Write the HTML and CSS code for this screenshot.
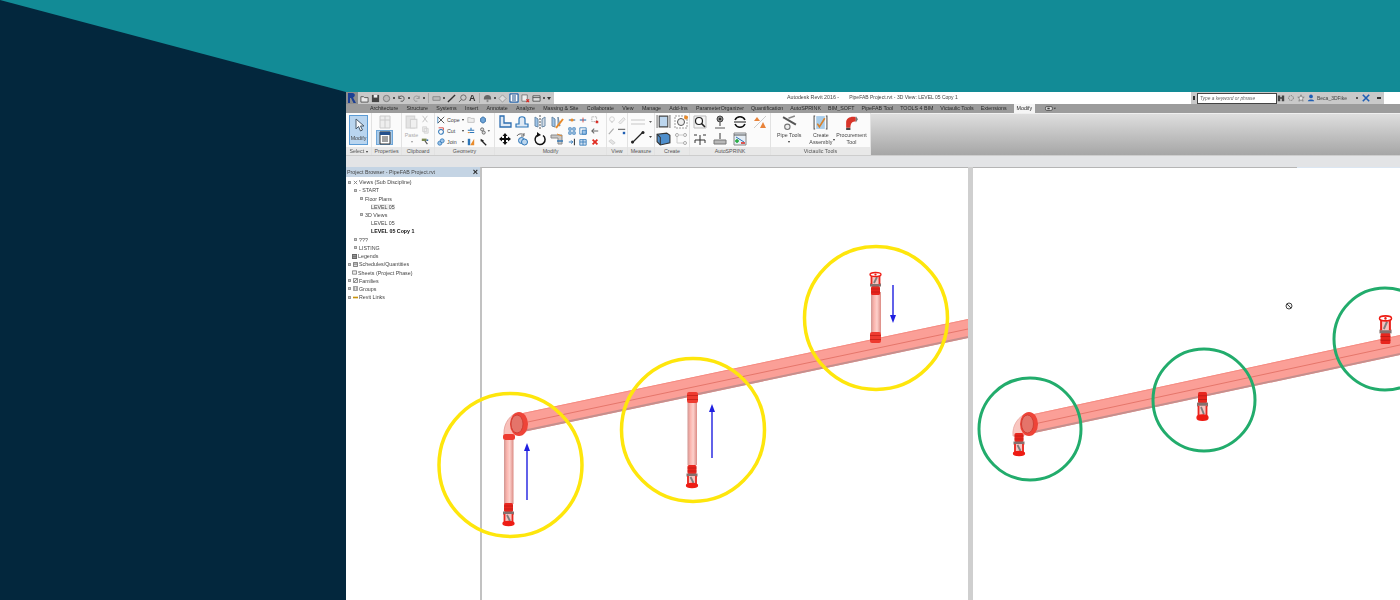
FILE: index.html
```html
<!DOCTYPE html>
<html lang="en">
<head>
    <meta charset="UTF-8">
    <meta name="viewport" content="width=device-width, initial-scale=1.0">
    <title>PipeFAB sprinkler drops</title>
    <link rel="stylesheet" href="styles.css">
</head>
<body>
<div class="page">
    <div class="side"></div>

    <div class="window">
        <!-- Title bar -->
        <div class="titlebar">
            <div class="qat">
                <svg class="logo" viewBox="0 0 12 12"><path d="M2 11V1h4.500c3 0 3 4 .5 4.500L10 11H7.500L5 6H4v5z" fill="#1c3f94"/></svg>
                <svg class="qi" viewBox="0 0 10 10"><path d="M1 3h3l1 1h4v5H1z" fill="#e8e8e8" stroke="#555"/></svg>
                <svg class="qi" viewBox="0 0 10 10"><path d="M1 1h8v8H1z" fill="#444"/><path d="M3 1h4v3H3z" fill="#eee"/></svg>
                <svg class="qi" viewBox="0 0 10 10"><circle cx="5" cy="5" r="3.500" fill="#bbb" stroke="#777"/></svg>
                <span class="dot"></span>
                <svg class="qi" viewBox="0 0 10 10"><path d="M2 5a3 3 0 1 1 2 3M2 2v3h3" fill="none" stroke="#555"/></svg>
                <span class="dot"></span>
                <svg class="qi" viewBox="0 0 10 10"><path d="M8 5a3 3 0 1 0-2 3M8 2v3H5" fill="none" stroke="#999"/></svg>
                <span class="dot"></span>
                <span class="qsep"></span>
                <svg class="qi" viewBox="0 0 10 10"><path d="M1 3h8v4H1z" fill="#bbb" stroke="#888"/></svg>
                <span class="dot"></span>
                <svg class="qi" viewBox="0 0 10 10"><path d="M1 9l8-8" stroke="#333" stroke-width="1.500"/></svg>
                <svg class="qi" viewBox="0 0 10 10"><circle cx="6" cy="4" r="3" fill="none" stroke="#666"/><path d="M4 6L1 9" stroke="#666"/></svg>
                <span class="qa">A</span>
                <span class="qsep"></span>
                <svg class="qi" viewBox="0 0 10 10"><path d="M1 5a4 4 0 0 1 8 0v1H1z" fill="#666"/><path d="M4 6v3h2V6z" fill="#888"/></svg>
                <span class="dot"></span>
                <svg class="qi" viewBox="0 0 10 10"><path d="M5 1l4 4-4 4-4-4z" fill="#ddd" stroke="#999"/></svg>
                <svg class="qi qi-on" viewBox="0 0 10 10"><path d="M1 1h8v8H1z" fill="#fff" stroke="#1c4f8c"/><path d="M3 3h4M3 5h4M3 7h4" stroke="#1c4f8c"/></svg>
                <svg class="qi" viewBox="0 0 10 10"><path d="M1 1h6v7H1z" fill="#eee" stroke="#777"/><path d="M6 6l3 3M9 6L6 9" stroke="#d8261e" stroke-width="1.300"/></svg>
                <svg class="qi" viewBox="0 0 10 10"><path d="M1 2h8v6H1z" fill="#ddd" stroke="#555"/><path d="M1 4h8" stroke="#555"/></svg>
                <span class="dot"></span>
                <span class="qdrop"></span>
            </div>
            <div class="doc-title"><span>Autodesk Revit 2016 -</span><span class="doc-name">PipeFAB Project.rvt - 3D View: LEVEL 05 Copy 1</span></div>
            <div class="infocenter">
                <span class="grip"></span>
                <div class="search">Type a keyword or phrase</div>
                <svg class="qi" viewBox="0 0 10 10"><path d="M1 2h3v7H1zM6 2h3v7H6zM4 4h2v2H4z" fill="#444"/></svg>
                <svg class="qi" viewBox="0 0 10 10"><circle cx="5" cy="5" r="3" fill="none" stroke="#666" stroke-dasharray="1.500 1"/></svg>
                <svg class="qi" viewBox="0 0 10 10"><path d="M5 1l1.200 3H9L6.800 6l.8 3L5 7.300 2.400 9l.8-3L1 4h2.800z" fill="#eee" stroke="#666" stroke-width=".8"/></svg>
                <svg class="qi" viewBox="0 0 10 10"><circle cx="5" cy="3" r="2.300" fill="#1f5fb4"/><path d="M1 9c0-3 8-3 8 0z" fill="#1f5fb4"/></svg>
                <span class="user">Beca_3DFike</span>
                <span class="dot dot-user"></span>
                <svg class="qi qi-x" viewBox="0 0 10 10"><path d="M1 1l8 8M9 1L1 9" stroke="#1f5fb4" stroke-width="2"/></svg>
                <span class="min"></span>
            </div>
        </div>

        <!-- Ribbon tabs -->
        <div class="tabs">
            <span>Architecture</span><span>Structure</span><span>Systems</span><span>Insert</span><span>Annotate</span><span>Analyze</span><span>Massing &amp; Site</span><span>Collaborate</span><span>View</span><span>Manage</span><span>Add-Ins</span><span>ParameterOrganizer</span><span>Quantification</span><span>AutoSPRINK</span><span>BIM_SOFT</span><span>PipeFAB Tool</span><span>TOOLS 4 BIM</span><span>Victaulic Tools</span><span>Extensions</span><span class="tab-on">Modify</span>
            <svg class="tab-eye" viewBox="0 0 14 6"><rect x=".5" y=".5" width="9" height="5" rx="2" fill="#ddd" stroke="#444"/><rect x="3" y="2" width="3" height="2" fill="#333"/><path d="M11 2h3l-1.500 2z" fill="#333"/></svg>
        </div>

        <!-- Ribbon -->
        <div class="ribbon">
            <div class="panel p-select">
                <div class="panel-body">
                    <div class="modify-btn">
                        <svg class="ic" viewBox="0 0 14 14"><path d="M4 1v10l2.500-2.500L8.500 13l2-1-2-4H12z" fill="#f4f7fa" stroke="#4a5a6a"/></svg>
                        <span>Modify</span>
                    </div>
                </div>
                <div class="panel-label">Select <i class="caret"></i></div>
            </div>

            <div class="panel p-props">
                <div class="panel-body col-center">
                    <svg class="ic" viewBox="0 0 14 14"><path d="M2 1h10v12H2z" fill="#eee" stroke="#ccc"/><path d="M2 5h10M7 1v12" stroke="#ccc"/></svg>
                    <div class="props-on">
                        <svg class="ic" viewBox="0 0 14 14"><path d="M2 1h10v12H2z" fill="#fff" stroke="#333"/><path d="M2 1h10v3H2z" fill="#24508c"/><path d="M4 6h6M4 8h6M4 10h6" stroke="#444"/></svg>
                    </div>
                </div>
                <div class="panel-label">Properties</div>
            </div>

            <div class="panel p-clip">
                <div class="panel-body">
                    <div class="paste">
                        <svg class="ic ic-big" viewBox="0 0 14 14"><path d="M2 2h8v11H2z" fill="#e4e4e4" stroke="#d2d2d2"/><path d="M6 5h6v8H6z" fill="#f0f0f0" stroke="#d2d2d2"/></svg>
                        <span>Paste</span>
                        <i class="caret caret-faint"></i>
                    </div>
                    <div class="stack">
                        <svg class="is" viewBox="0 0 10 10"><path d="M2 1l6 8M8 1L2 9" stroke="#c4c4c4" stroke-width="1.200"/></svg>
                        <svg class="is" viewBox="0 0 10 10"><path d="M2 1h5v6H2zM4 3h5v6H4z" fill="#eee" stroke="#d0d0d0"/></svg>
                        <svg class="is" viewBox="0 0 10 10"><path d="M1 2h6v3H1z" fill="#7d8a52"/><path d="M5 5l3 4" stroke="#555" stroke-width="1.500"/><path d="M7 3h2v2H7z" fill="#3b6fb0"/></svg>
                    </div>
                </div>
                <div class="panel-label">Clipboard</div>
            </div>

            <div class="panel p-geom">
                <div class="panel-body">
                    <div class="geom-grid">
                        <div class="tool"><svg class="is" viewBox="0 0 10 10"><path d="M1 1l8 8M9 1L1 9" stroke="#555" stroke-width="1.200"/><path d="M1 1v8" stroke="#2d76b8"/></svg><span>Cope</span><i class="caret"></i></div>
                        <svg class="is" viewBox="0 0 10 10"><path d="M1 2h3l1 1h4v5H1z" fill="#eee" stroke="#bbb"/></svg>
                        <svg class="is" viewBox="0 0 10 10"><path d="M2 3l3-2 3 2v4L5 9 2 7z" fill="#6fa5d8" stroke="#25619c"/></svg>
                        <div class="tool"><svg class="is" viewBox="0 0 10 10"><circle cx="5" cy="6" r="3" fill="none" stroke="#2d76b8" stroke-width="1.300"/><path d="M2 1h6v3" fill="none" stroke="#d8352a"/></svg><span>Cut</span><i class="caret"></i></div>
                        <svg class="is" viewBox="0 0 10 10"><path d="M1 4h8M5 1v3M3 7h6" stroke="#2d76b8" stroke-width="1.300"/><path d="M1 7h2" stroke="#e88a2a" stroke-width="1.300"/></svg>
                        <svg class="is is-wide" viewBox="0 0 14 10"><circle cx="4" cy="3" r="2" fill="#ddd" stroke="#555"/><circle cx="6" cy="7" r="2" fill="#ddd" stroke="#555"/><path d="M11 4h3l-1.500 2z" fill="#444"/></svg>
                        <div class="tool"><svg class="is" viewBox="0 0 10 10"><circle cx="3.500" cy="6.500" r="2.500" fill="#9cc3e8" stroke="#2d76b8"/><circle cx="6.500" cy="3.500" r="2.500" fill="#9cc3e8" stroke="#2d76b8"/></svg><span>Join</span><i class="caret"></i></div>
                        <svg class="is" viewBox="0 0 10 10"><path d="M1 1h3v8H1z" fill="#2d76b8"/><path d="M4 9l5-8v8z" fill="#e88a2a"/></svg>
                        <svg class="is" viewBox="0 0 10 10"><path d="M2 1l4 2-1 2L2 4z" fill="#222"/><path d="M4 4l5 5" stroke="#222" stroke-width="1.600"/></svg>
                    </div>
                </div>
                <div class="panel-label">Geometry</div>
            </div>

            <div class="panel p-modify">
                <div class="panel-body">
                    <div class="big-grid">
                        <svg class="ic" viewBox="0 0 14 14"><path d="M2 1v11h11V8H6V1z" fill="#dfe9f4" stroke="#2d6db0" stroke-width="1.300"/></svg>
                        <svg class="ic" viewBox="0 0 14 14"><path d="M1 12V9h3V4c0-3 6-3 6 0v5h3v3z" fill="#dfe9f4" stroke="#2d76b8" stroke-width="1.200"/></svg>
                        <svg class="ic" viewBox="0 0 14 14"><path d="M2 2l3 2v8l-3-1z" fill="#9cc3e8" stroke="#6a8aa8"/><path d="M12 2L9 4v8l3-1z" fill="#d5dde5" stroke="#6a8aa8"/><path d="M7 0v14" stroke="#555" stroke-dasharray="2 1"/></svg>
                        <svg class="ic" viewBox="0 0 14 14"><path d="M2 2l3 2v8l-3-1z" fill="#9cc3e8" stroke="#6a8aa8"/><path d="M8 2v8l2 1z" fill="#d5dde5" stroke="#6a8aa8"/><path d="M6 13l7-9" stroke="#e88a2a" stroke-width="2"/></svg>
                        <svg class="ic" viewBox="0 0 14 14"><path d="M7 1l2.500 3h-5zM7 13l2.500-3h-5zM1 7l3-2.500v5zM13 7l-3-2.500v5z" fill="#111"/><path d="M3 6h8v2H3zM6 3h2v8H6z" fill="#111"/></svg>
                        <svg class="ic" viewBox="0 0 14 14"><path d="M2 4a4 3 0 0 1 7-1M9 1v3H6" fill="none" stroke="#666"/><circle cx="6.500" cy="8.500" r="3" fill="#bcd6ee" stroke="#2d76b8"/><circle cx="9.500" cy="10" r="3" fill="#bcd6ee" stroke="#2d76b8"/></svg>
                        <svg class="ic" viewBox="0 0 14 14"><path d="M10 3.500a5 5 0 1 1-5-.5" fill="none" stroke="#111" stroke-width="1.500"/><path d="M4 0l4 3-4 2z" fill="#111"/></svg>
                        <svg class="ic" viewBox="0 0 14 14"><path d="M1 3h11v9H8V6H1z" fill="#c8c8c8" stroke="#8a8a8a"/><path d="M7 9h6" stroke="#2d76b8" stroke-width="1.400"/><path d="M7 2l5 2" stroke="#e88a2a"/></svg>
                    </div>
                    <div class="small-grid">
                        <svg class="is" viewBox="0 0 10 10"><path d="M1 5h8" stroke="#2d76b8" stroke-width="1.400"/><circle cx="5" cy="5" r="2" fill="#e88a2a"/></svg>
                        <svg class="is" viewBox="0 0 10 10"><path d="M1 5h8" stroke="#2d76b8" stroke-width="1.400"/><path d="M5 2v6" stroke="#d8352a"/></svg>
                        <svg class="is" viewBox="0 0 10 10"><path d="M1 1h6v6H1z" fill="none" stroke="#888" stroke-dasharray="1 1"/><path d="M6 6l3 3M9 6L6 9" stroke="#d8261e" stroke-width="1.400"/></svg>
                        <svg class="is" viewBox="0 0 10 10"><path d="M1 1h3v3H1zM6 1h3v3H6zM1 6h3v3H1zM6 6h3v3H6z" fill="#cfe0f1" stroke="#2d76b8"/></svg>
                        <svg class="is" viewBox="0 0 10 10"><path d="M1 1h8v8H1z" fill="none" stroke="#2d76b8"/><path d="M4 4h5v5H4z" fill="#9cc3e8" stroke="#2d76b8"/></svg>
                        <svg class="is" viewBox="0 0 10 10"><path d="M1 5h8M4 2L1 5l3 3" fill="none" stroke="#666" stroke-width="1.300"/></svg>
                        <svg class="is" viewBox="0 0 10 10"><path d="M1 5h5M4 3l2 2-2 2" fill="none" stroke="#2d76b8" stroke-width="1.200"/><path d="M8 1v8" stroke="#333" stroke-width="1.300"/></svg>
                        <svg class="is" viewBox="0 0 10 10"><path d="M1 2h8v7H1z" fill="#cfe0f1" stroke="#2d76b8"/><path d="M1 5h8M5 2v7" stroke="#2d76b8"/></svg>
                        <svg class="is" viewBox="0 0 10 10"><path d="M2 2l6 6M8 2L2 8" stroke="#e02b20" stroke-width="2.200"/></svg>
                    </div>
                </div>
                <div class="panel-label">Modify</div>
            </div>

            <div class="panel p-view">
                <div class="panel-body">
                    <div class="view-grid">
                        <svg class="is" viewBox="0 0 10 10"><circle cx="5" cy="4" r="3" fill="#fafafa" stroke="#ccc"/><path d="M4 8h2" stroke="#ccc"/></svg>
                        <svg class="is" viewBox="0 0 10 10"><path d="M1 8l6-6 2 2-6 6z" fill="#eee" stroke="#ccc"/></svg>
                        <svg class="is" viewBox="0 0 10 10"><path d="M1 9l6-7" stroke="#aaa" stroke-width="1.300"/></svg>
                        <svg class="is" viewBox="0 0 10 10"><path d="M0 3h9" stroke="#777" stroke-width="1.600"/><path d="M6 6h3v3H6z" fill="#1f5fb4"/></svg>
                        <svg class="is" viewBox="0 0 10 10"><path d="M1 4l3-2 5 4-3 2z" fill="#e6e6e6" stroke="#ccc"/></svg>
                    </div>
                </div>
                <div class="panel-label">View</div>
            </div>

            <div class="panel p-measure">
                <div class="panel-body col-center">
                    <svg class="ic ic-wide" viewBox="0 0 22 14"><path d="M1 5h14M1 9h14" stroke="#c8c8c8" stroke-width="1.200"/><path d="M19 6h3l-1.500 2z" fill="#666"/></svg>
                    <svg class="ic ic-wide" viewBox="0 0 22 14"><path d="M2 13L13 2" stroke="#222" stroke-width="1.200"/><circle cx="2.500" cy="12" r="1.500" fill="#222"/><circle cx="13" cy="2.500" r="1.500" fill="#222"/><path d="M19 6h3l-1.500 2z" fill="#444"/></svg>
                </div>
                <div class="panel-label">Measure</div>
            </div>

            <div class="panel p-create">
                <div class="panel-body">
                    <div class="create-grid">
                        <svg class="ic ic-big" viewBox="0 0 14 14"><path d="M1 1v12M13 1v12" stroke="#777"/><path d="M3 2h8v10H3z" fill="#bcd6ee" stroke="#444"/></svg>
                        <svg class="ic" viewBox="0 0 14 14"><path d="M1 1h12v12H1z" fill="#fff" stroke="#999" stroke-dasharray="2 1"/><circle cx="7" cy="7" r="3.500" fill="#eee" stroke="#555"/><circle cx="12" cy="2.500" r="2" fill="#e88a2a"/></svg>
                        <svg class="ic ic-big" viewBox="0 0 14 14"><path d="M1 3l9-1 3 2v7l-9 2-3-3z" fill="#4f8fcc" stroke="#333"/><path d="M1 3l3 3v7" fill="none" stroke="#333"/></svg>
                        <svg class="ic" viewBox="0 0 14 14"><circle cx="3" cy="3" r="1.500" fill="#fff" stroke="#aaa"/><circle cx="11" cy="3" r="1.500" fill="#fff" stroke="#aaa"/><circle cx="11" cy="11" r="1.500" fill="#fff" stroke="#aaa"/><path d="M4 3h6M3 5v6h6" fill="none" stroke="#ccc"/></svg>
                    </div>
                </div>
                <div class="panel-label">Create</div>
            </div>

            <div class="panel p-auto">
                <div class="panel-body">
                    <div class="auto-grid">
                        <svg class="ic" viewBox="0 0 14 14"><path d="M1 1h12v12H1z" fill="#f4f4f4" stroke="#bbb"/><circle cx="6" cy="6" r="3.500" fill="#fff" stroke="#222" stroke-width="1.200"/><path d="M8.500 8.500L12 12" stroke="#222" stroke-width="1.600"/></svg>
                        <svg class="ic" viewBox="0 0 14 14"><circle cx="7" cy="4" r="3" fill="#888" stroke="#444"/><circle cx="7" cy="4" r="1" fill="#111"/><path d="M7 7v4" stroke="#777" stroke-width="1.500"/><path d="M2 12h10v2H2z" fill="#aaa"/></svg>
                        <svg class="ic" viewBox="0 0 14 14"><path d="M2 5a5.500 5.500 0 0 1 10 0M12 9a5.500 5.500 0 0 1-10 0" fill="none" stroke="#111" stroke-width="1.500"/><path d="M1 6h12v2H1z" fill="#8a8a8a"/></svg>
                        <svg class="ic" viewBox="0 0 14 14"><path d="M1 6l3-4 3 4zM7 13l3-6 3 6z" fill="#e8833a"/><path d="M1 13L13 1" stroke="#ccc"/></svg>
                        <svg class="ic" viewBox="0 0 14 14"><path d="M1 3h3M10 3h3M7 3v5M2 8h10M2 8v3M12 8v3M7 8v5" fill="none" stroke="#333"/></svg>
                        <svg class="ic" viewBox="0 0 14 14"><path d="M7 1v6" stroke="#777" stroke-width="1.500"/><path d="M1 8h12v4H1z" fill="#b8b8b8" stroke="#777"/></svg>
                        <svg class="ic" viewBox="0 0 14 14"><path d="M1 1h12v12H1z" fill="#e6eef6" stroke="#888"/><path d="M1 3h12" stroke="#555"/><path d="M3 5l8 5" stroke="#2d76b8"/><path d="M2 9h4M4 7v4" stroke="#1faa3c" stroke-width="1.500"/><path d="M8 11h4" stroke="#d8261e" stroke-width="1.500"/></svg>
                    </div>
                </div>
                <div class="panel-label">AutoSPRINK</div>
            </div>

            <div class="panel p-vic">
                <div class="panel-body vic-body">
                    <div class="vic-tool">
                        <svg class="ic ic-big" viewBox="0 0 14 14"><path d="M1 2l12 7" stroke="#555" stroke-width="1.800"/><path d="M6 3l6-2" stroke="#888" stroke-width="1.400"/><circle cx="5" cy="11" r="2.500" fill="#eee" stroke="#777"/></svg>
                        <span>Pipe Tools</span>
                        <i class="caret"></i>
                    </div>
                    <div class="vic-tool">
                        <svg class="ic ic-big" viewBox="0 0 14 14"><path d="M2 1H1v12h1M12 1h1v12h-1" fill="none" stroke="#555"/><path d="M3 1h8v12H3z" fill="#a9cdea"/><path d="M4 8l2 3 5-8" fill="none" stroke="#d9822b" stroke-width="1.500"/></svg>
                        <span>Create<br>Assembly</span>
                    </div>
                    <i class="caret caret-side"></i>
                    <div class="vic-tool">
                        <svg class="ic ic-big" viewBox="0 0 14 14"><path d="M2 12V7c0-4 4-6 9-5v4c-3 0-5 1-5 6z" fill="#d8352a"/><path d="M11 1l2 3-2 3z" fill="#777"/><path d="M2 12h4v2H2z" fill="#444"/></svg>
                        <span>Procurement<br>Tool</span>
                    </div>
                </div>
                <div class="panel-label">Victaulic Tools</div>
            </div>

            <div class="ribbon-rest"></div>
        </div>

        <div class="band"></div>

        <!-- Project browser and the two 3D views -->
        <div class="workspace">
            <div class="browser">
                <div class="browser-head"><span>Project Browser - PipeFAB Project.rvt</span><b>×</b></div>
                <ul class="tree">
                    <li class="d0"><i class="tw"></i><svg class="ti" viewBox="0 0 6 6"><path d="M1 1l4 4M5 1L1 5" stroke="#777"/></svg>Views (Sub Discipline)</li>
                    <li class="d1"><i class="tw"></i>- START</li>
                    <li class="d2"><i class="tw"></i>Floor Plans</li>
                    <li class="d3"><span class="current">LEVEL 05</span></li>
                    <li class="d2"><i class="tw"></i>3D Views</li>
                    <li class="d3">LEVEL 05</li>
                    <li class="d3 open-view">LEVEL 05 Copy 1</li>
                    <li class="d1"><i class="tw"></i>???</li>
                    <li class="d1"><i class="tw"></i>LISTING</li>
                    <li class="d0 no-tw"><svg class="ti" viewBox="0 0 6 6"><path d="M0 0h6v6H0z" fill="#666"/><path d="M1 2h4M1 4h4" stroke="#ddd" stroke-width=".6"/></svg>Legends</li>
                    <li class="d0"><i class="tw"></i><svg class="ti" viewBox="0 0 6 6"><path d="M.5.5h5v5h-5z" fill="#ddd" stroke="#666"/><path d="M1 2.500h4" stroke="#666"/></svg>Schedules/Quantities</li>
                    <li class="d0 no-tw"><svg class="ti" viewBox="0 0 6 6"><path d="M.5 1h5v4h-5z" fill="#eee" stroke="#777"/></svg>Sheets (Project Phase)</li>
                    <li class="d0"><i class="tw"></i><svg class="ti" viewBox="0 0 6 6"><path d="M.5.5h5v5h-5z" fill="#eee" stroke="#777"/><path d="M1 5l4-4" stroke="#777"/></svg>Families</li>
                    <li class="d0"><i class="tw"></i><svg class="ti" viewBox="0 0 6 6"><path d="M.5.5h5v5h-5z" fill="#fff" stroke="#888"/><path d="M2 1v4M4 1v4" stroke="#888"/></svg>Groups</li>
                    <li class="d0"><i class="tw"></i><svg class="ti" viewBox="0 0 6 6"><path d="M0 2h6v2H0z" fill="#c9920c"/></svg>Revit Links</li>
                </ul>
            </div>
            <div class="view view-one"></div>
            <div class="view view-two"></div>

            <svg class="model" viewBox="346 167 1054 433">
                <defs>
                    <linearGradient id="tube">
                        <stop offset="0" stop-color="#cf9692"/>
                        <stop offset=".3" stop-color="#fbb4ad"/>
                        <stop offset=".6" stop-color="#fdd0cb"/>
                        <stop offset="1" stop-color="#dc8b84"/>
                    </linearGradient>
                    <g id="sprinkler">
                        <rect x="-4.500" y="0" width="9" height="9" rx="1.500" fill="#e8261e"/>
                        <path d="M-4.500 3h9M-4.500 6h9" stroke="#b81a14" stroke-width=".7"/>
                        <rect x="-5.500" y="8.500" width="11" height="3" fill="#85706e"/>
                        <rect x="-4.500" y="11" width="9" height="8.500" fill="#f7c4c0"/>
                        <path d="M-4 11v8M4 11v8" stroke="#e8261e" stroke-width="1.800"/>
                        <path d="M-1.500 12l3 6" stroke="#7e7e7e" stroke-width="1.800"/>
                        <ellipse cx="0" cy="20.500" rx="5.500" ry="2" fill="currentColor" stroke="#ee1c14" stroke-width="1.300"/>
                        <circle cx="0" cy="20.500" r="1.100" fill="#ee1c14"/>
                    </g>
                    <g id="coupling">
                        <rect x="0" y="0" width="11" height="11" rx="2" fill="#ee3b30"/>
                        <path d="M0 3.500h11M0 7.500h11" stroke="#c02018" stroke-width=".8"/>
                    </g>
                </defs>

                <!-- left view: pipe with three drops -->
                <polygon points="523,413 968,319 968,338 523,432" fill="#fb9f97"/>
                <path d="M523 413.500L968 319.500" stroke="#f58c82" stroke-width="1"/>
                <path d="M523 423L968 329" stroke="#e5766b" stroke-width="1"/>
                <path d="M523 431L968 337" stroke="#c68f8d" stroke-width="2"/>

                <path d="M504.500 439C502 426 508 417 516 413L522 431C516 431 513 434 513.500 439Z" fill="#f9c0ba" stroke="#e29c96" stroke-width=".8"/>
                <rect x="504" y="440" width="9.500" height="64" fill="url(#tube)"/>
                <rect x="503" y="434" width="12" height="6" rx="2.500" fill="#ee3b30"/>
                <ellipse cx="519" cy="424" rx="9" ry="12" fill="#ee4438"/>
                <ellipse cx="517" cy="424" rx="6" ry="9" fill="#e5746a" stroke="#c8382e" stroke-width=".8"/>
                <use class="defl-red" href="#sprinkler" transform="translate(508.500 503)"/>

                <rect x="687.500" y="402" width="9.500" height="63" fill="url(#tube)"/>
                <use href="#coupling" transform="translate(687 392)"/>
                <use class="defl-red" href="#sprinkler" transform="translate(692 465)"/>

                <rect x="871" y="292" width="10" height="41" fill="url(#tube)"/>
                <use href="#coupling" transform="translate(870 332)"/>
                <use class="defl-white" href="#sprinkler" transform="translate(875.500 295) scale(1 -1)"/>

                <g class="flow">
                    <path d="M527 500V448"/>
                    <path d="M712 458V409"/>
                    <path d="M893 285V318"/>
                </g>
                <path class="flow-head" d="M527 443l-3 8h6zM712 404l-3 8h6zM893 323l-3-8h6z"/>

                <circle class="ring-y" cx="510.500" cy="465" r="71.500"/>
                <circle class="ring-y" cx="693" cy="430" r="71.500"/>
                <circle class="ring-y" cx="876" cy="318" r="71.500"/>

                <!-- right view: same pipe, sprinklers on the run -->
                <polygon points="1034,414 1400,335 1400,355 1034,433" fill="#fb9f97"/>
                <path d="M1034 414.500L1400 335.500" stroke="#f58c82" stroke-width="1"/>
                <path d="M1034 424L1400 345" stroke="#e5766b" stroke-width="1"/>
                <path d="M1034 432L1400 354" stroke="#c68f8d" stroke-width="2"/>

                <path d="M1013 436C1012 425 1018 417 1027 413L1030 432C1026 433 1024 434 1024 436Z" fill="#f9c6c0" stroke="#e8a8a2" stroke-width=".8"/>
                <ellipse cx="1029" cy="424" rx="9" ry="12" fill="#ee4438"/>
                <ellipse cx="1027.500" cy="424" rx="6" ry="9" fill="#e5746a" stroke="#c8382e" stroke-width=".8"/>
                <use class="defl-red" href="#sprinkler" transform="translate(1019 433)"/>
                <use class="defl-red" href="#sprinkler" transform="translate(1202.500 392) scale(1 1.250)"/>
                <use class="defl-white" href="#sprinkler" transform="translate(1385.500 344) scale(1.100 -1.250)"/>

                <circle class="ring-g" cx="1030" cy="429" r="51"/>
                <circle class="ring-g" cx="1204" cy="400" r="51"/>
                <circle class="ring-g" cx="1385" cy="339" r="51"/>

                <!-- no-drop cursor -->
                <circle cx="1289" cy="306" r="3" fill="#f2f2f2" stroke="#444" stroke-width="1"/>
                <path d="M1287 304l4 4" stroke="#444" stroke-width="1"/>
            </svg>
        </div>
    </div>
</div>
</body>
</html>
```

FILE: styles.css
```css
body {
    margin: 0;
    background-color: #128b96; /* teal band behind the screenshot */
    font-family: "Liberation Sans", Arial, sans-serif;
    font-size: 5.3px;
    color: #444;
}

.page {
    display: flex;
    height: 600px;
    overflow: hidden;
}

.side {
    flex: 0 0 346px;
    background-color: #03273d;
    clip-path: polygon(0 0, 100% 92px, 100% 100%, 0 100%);
}

.window {
    flex: 1;
    margin-top: 92px;
    display: flex;
    flex-direction: column;
    background-color: #fff;
    min-width: 0;
}

/* Title bar */
.titlebar {
    flex: 0 0 12px;
    min-height: 0;
    display: flex;
    align-items: stretch;
    background-color: #fff;
    filter: blur(.35px);
}

.qat {
    flex: 0 0 208px;
    display: flex;
    align-items: center;
    gap: 2px;
    background-color: #c8c8c8;
}

.logo {
    width: 12px;
    height: 12px;
    background-color: #8d8d8d;
}

.qi {
    width: 9px;
    height: 9px;
    flex: none;
}

.qi-on {
    width: 10px;
    height: 10px;
    background-color: #8db8e2;
}

.qa {
    width: 7px;
    font-size: 9px;
    line-height: 9px;
    font-weight: bold;
    color: #333;
}

.dot {
    width: 2px;
    height: 2px;
    background-color: #555;
    flex: none;
}

.qsep {
    width: 1px;
    height: 10px;
    margin: 0 1px;
    background-color: #aaa;
}

.qdrop {
    width: 0;
    height: 0;
    border: 2px solid transparent;
    border-top: 3px solid #333;
    margin-top: 2px;
}

.doc-title {
    margin-left: 233px;
    display: flex;
    gap: 10px;
    line-height: 11px;
    white-space: nowrap;
}

.doc-name {
    font-size: 5px;
}

.infocenter {
    margin-left: auto;
    margin-right: 16px;
    width: 193px;
    display: flex;
    align-items: center;
    gap: 2px;
    background-color: #c9c9c9;
}

.infocenter .qi {
    width: 8px;
    height: 8px;
}

.grip {
    width: 2px;
    height: 4px;
    margin-left: 2px;
    background-color: #333;
}

.search {
    flex: none;
    width: 76px;
    height: 9px;
    margin-right: -2px;
    padding-left: 2px;
    line-height: 9px;
    font-style: italic;
    font-size: 4.800px;
    color: #666;
    background-color: #fff;
    border: 1px solid #444;
}

.user {
    flex: none;
    width: 30px;
    white-space: nowrap;
    font-size: 5px;
}

.dot-user {
    margin-left: 7px;
}

.qi-x {
    margin-left: 2px;
}

.min {
    width: 4px;
    height: 2px;
    margin-left: 5px;
    background-color: #333;
}

/* Ribbon tabs */
.tabs {
    flex: 0 0 9px;
    min-height: 0;
    display: flex;
    align-items: center;
    gap: 8.300px;
    padding-left: 24px;
    background-color: #9c9c9c;
    line-height: 9px;
    white-space: nowrap;
    color: #262626;
    filter: blur(.3px);
}

/* the add-in tabs sit closer together */
.tabs span:nth-child(n+13) {
    margin-left: -1.300px;
}

.tabs .tab-on {
    background-color: #f5f5f5;
    padding: 0 3px;
    margin: 0 -3px 0 -4.300px;
}

.tab-eye {
    width: 11px;
    height: 5px;
    margin-left: 4px;
}

/* Ribbon */
.ribbon {
    flex: 0 0 42px;
    height: 42px;
    min-height: 0;
    display: flex;
    filter: blur(.35px);
}

.panel {
    display: flex;
    flex-direction: column;
    flex: none;
    height: 42px;
    border-right: 1px solid #e2e2e2;
    box-sizing: border-box;
}

.p-select { width: 26px; }
.p-props { width: 30px; }
.p-clip { width: 33px; }
.p-geom { width: 60px; }
.p-modify { width: 112px; }
.p-view { width: 21px; }
.p-measure { width: 27px; }
.p-create { width: 35px; }
.p-auto { width: 81px; }
.p-vic { width: 100px; }

.panel-body {
    flex: 1;
    display: flex;
    min-height: 0;
    background-color: #fbfbfb;
}

.panel-label {
    flex: 0 0 8px;
    line-height: 8px;
    text-align: center;
    white-space: nowrap;
    background-color: #e8e8e8;
    color: #555;
}

.ribbon-rest {
    flex: 1;
    border-top: 1px solid #efefef;
    background-image: linear-gradient(#dedede, #a6a6a6);
}

.caret {
    display: inline-block;
    width: 0;
    height: 0;
    border: 1.500px solid transparent;
    border-top: 2px solid #333;
    border-bottom: 0;
    vertical-align: middle;
    flex: none;
}

.caret-faint {
    border-top-color: #999;
}

.ic {
    width: 14px;
    height: 14px;
    flex: none;
}

.ic-big {
    width: 15px;
    height: 15px;
}

.ic-wide {
    width: 22px;
    height: 14px;
}

.is {
    width: 8px;
    height: 8px;
    flex: none;
}

.is-wide {
    width: 11px;
}

.col-center {
    flex-direction: column;
    align-items: center;
    gap: 1px;
    padding-top: 2px;
}

.p-props .col-center {
    padding-right: 4px;
}

.modify-btn {
    flex: 1;
    margin: 2px 3px 2px 3px;
    display: flex;
    flex-direction: column;
    align-items: center;
    gap: 3px;
    padding-top: 2px;
    background-color: #b9d5ef;
    border: 1px solid #5b9bd5;
}

.props-on {
    display: flex;
    justify-content: center;
    width: 17px;
    height: 15px;
    background-color: #a9cbea;
    border: 1px solid #6ea6d8;
    box-sizing: border-box;
}

.paste {
    width: 19px;
    display: flex;
    flex-direction: column;
    align-items: center;
    gap: 3px;
    padding-top: 1px;
    color: #aaa;
}

.stack {
    display: flex;
    flex-direction: column;
    gap: 3px;
    padding-top: 2px;
}

.geom-grid {
    display: grid;
    grid-template-columns: 30px 12px 12px;
    grid-auto-rows: 11px;
    align-items: center;
    padding: 1px 0 0 2px;
}

.tool {
    display: flex;
    align-items: center;
    gap: 2px;
}

.tool span {
    width: 13px;
}

.big-grid {
    display: grid;
    grid-template-columns: repeat(4, 17.500px);
    grid-auto-rows: 17px;
    align-items: center;
    justify-items: center;
    padding-left: 1px;
}

.small-grid {
    display: grid;
    grid-template-columns: repeat(3, 11.500px);
    grid-auto-rows: 11px;
    align-items: center;
    justify-items: center;
    padding-top: 1px;
}

.view-grid {
    display: grid;
    grid-template-columns: 10px 10px;
    grid-auto-rows: 11px;
    align-items: center;
    justify-items: center;
    padding-top: 1px;
}

.create-grid {
    display: grid;
    grid-template-columns: repeat(2, 17px);
    grid-auto-rows: 17px;
    align-items: center;
    justify-items: center;
}

.auto-grid {
    display: grid;
    grid-template-columns: repeat(4, 20px);
    grid-auto-rows: 17px;
    align-items: center;
    justify-items: center;
}

.vic-body {
    gap: 8px;
    padding: 2px 0 0 6px;
}

.vic-tool {
    display: flex;
    flex-direction: column;
    align-items: center;
    gap: 2px;
    text-align: center;
    line-height: 7px;
    white-space: nowrap;
}

.caret-side {
    margin: 24px -7px 0 -7px;
}

.band {
    flex: 0 0 12px;
    box-sizing: border-box;
    border-top: 1px solid #cdcdcd;
    background-color: #e3e4e6;
}

/* Browser and views */
.workspace {
    flex: 1;
    display: flex;
    position: relative;
    min-height: 0;
}

.browser {
    flex: 0 0 134px;
    background-color: #fff;
    filter: blur(.3px);
}

.browser-head {
    display: flex;
    justify-content: space-between;
    height: 10px;
    line-height: 10px;
    padding: 0 2px 0 1px;
    background-color: #c4d4e4;
}

.browser-head b {
    font-size: 9px;
    color: #222;
}

.tree {
    list-style: none;
    margin: 0;
    padding: 1px 0 0 0;
}

.tree li {
    display: flex;
    align-items: center;
    height: 8.230px;
    white-space: nowrap;
}

.d0 { padding-left: 2px; }
.d1 { padding-left: 8px; }
.d2 { padding-left: 14px; }
.d3 { padding-left: 25px; }
.no-tw { padding-left: 6px; }

.tw {
    width: 3px;
    height: 3px;
    margin-right: 2px;
    border: .5px solid #999;
    background-color: #ccc;
    box-sizing: border-box;
}

.ti {
    width: 5px;
    height: 5px;
    margin-right: 1px;
}

.current {
    background-color: #eee;
}

.open-view {
    font-weight: bold;
    color: #111;
}

.view {
    background-color: #fff;
}

.view-one {
    flex: 0 0 486px;
    border-left: 2px solid #c2c2c2;
    border-top: 1px solid #b5b5b5;
}

.view-two {
    flex: 1;
    border-left: 5px solid #cfcfcf;
    background-image: linear-gradient(to right, #b5b5b5 324px, #dbe6f2 324px);
    background-size: 100% 1px;
    background-repeat: no-repeat;
}

/* Model drawing laid over the panes */
.model {
    position: absolute;
    left: 0;
    top: 0;
    width: 1054px;
    height: 433px;
    filter: blur(.3px);
}

.defl-red {
    color: #ee1c14;
}

.defl-white {
    color: #fff;
}

.flow path {
    stroke: #1f1fe0;
    stroke-width: 1.400;
    fill: none;
}

.flow-head {
    fill: #1f1fe0;
}

.ring-y {
    fill: none;
    stroke: #fee60c;
    stroke-width: 3.500;
}

.ring-g {
    fill: none;
    stroke: #22ac6c;
    stroke-width: 3;
}
```
